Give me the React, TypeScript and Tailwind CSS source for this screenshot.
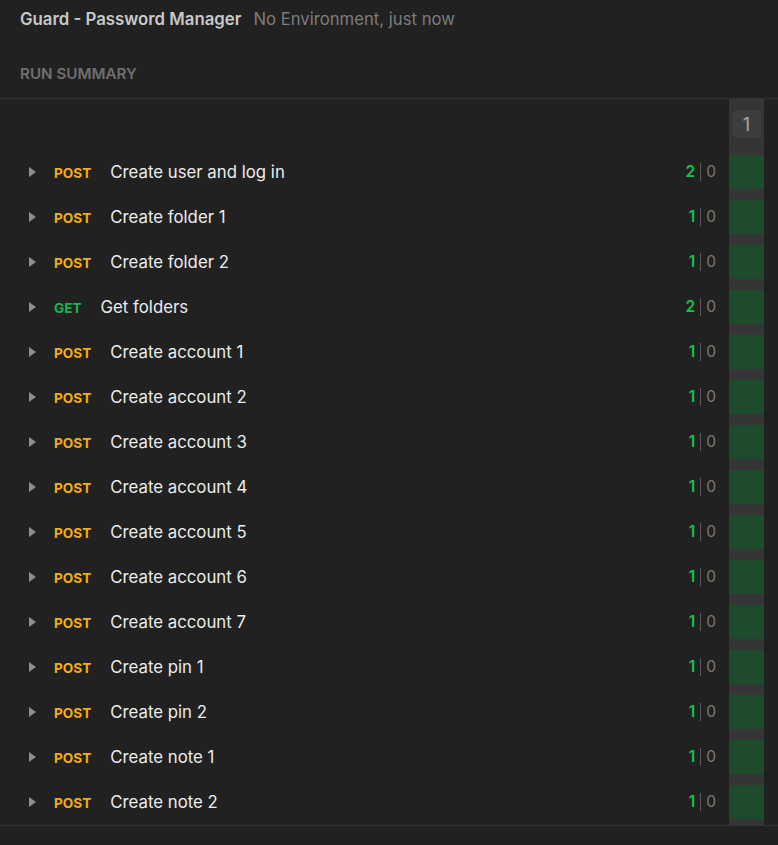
const requests = [
  { method: "POST", name: "Create user and log in", pass: 2 },
  { method: "POST", name: "Create folder 1", pass: 1 },
  { method: "POST", name: "Create folder 2", pass: 1 },
  { method: "GET", name: "Get folders", pass: 2 },
  { method: "POST", name: "Create account 1", pass: 1 },
  { method: "POST", name: "Create account 2", pass: 1 },
  { method: "POST", name: "Create account 3", pass: 1 },
  { method: "POST", name: "Create account 4", pass: 1 },
  { method: "POST", name: "Create account 5", pass: 1 },
  { method: "POST", name: "Create account 6", pass: 1 },
  { method: "POST", name: "Create account 7", pass: 1 },
  { method: "POST", name: "Create pin 1", pass: 1 },
  { method: "POST", name: "Create pin 2", pass: 1 },
  { method: "POST", name: "Create note 1", pass: 1 },
  { method: "POST", name: "Create note 2", pass: 1 },
];

const Caret = () => (
  <svg width="7" height="10" viewBox="0 0 7 10" className="shrink-0">
    <path d="M0 0 L7 5 L0 10 Z" fill="#8f8f8f" />
  </svg>
);

const App = () => {
  return (
    <div
      className="w-[778px] h-[845px] bg-[#212121] overflow-hidden"
      style={{ fontFamily: "Inter, 'Noto Sans', sans-serif" }}
    >
      <div className="flex items-center h-[39px] pl-[20px]">
        <span className="text-[16.8px] font-semibold text-[#c9c9c9]">
          Guard - Password Manager
        </span>
        <span className="ml-[12px] text-[16.7px] text-[#7d7d7d]">
          No Environment, just now
        </span>
      </div>

      <div className="flex items-center h-[60px] pl-[20px] pt-[12px] border-b border-[#333333]">
        <span className="text-[15.2px] font-semibold text-[#6f6f6f]">
          RUN SUMMARY
        </span>
      </div>

      <div className="border-b border-[#333333]">
        <div className="flex">
          <div className="flex-1" />
          <div className="w-[35px] h-[56px] bg-[#353535] flex justify-center pt-[11px] mr-[14px]">
            <div className="w-[28px] h-[28px] rounded-[4px] bg-[#3d3d3d] flex items-center justify-center text-[18px] text-[#a8a8a8]">
              1
            </div>
          </div>
        </div>

        {requests.map((req, i) => (
          <div key={i} className="flex">
            <div className="flex-1 h-[34px] flex items-center pl-[29px] pr-[13px]">
              <Caret />
              <div className="flex items-baseline pt-[1px] leading-none">
                <span
                  className={
                    req.method === "GET"
                      ? "ml-[18px] text-[13.6px] font-bold text-[#14b84e]"
                      : "ml-[18px] text-[13.6px] font-bold text-[#f6ad12]"
                  }
                >
                  {req.method}
                </span>
                <span className="ml-[19px] text-[16.8px] text-[#ececec]">
                  {req.name}
                </span>
              </div>
              <div className="ml-auto flex items-center text-[15.5px]">
                <span className="font-semibold text-[#16c24f]">{req.pass}</span>
                <span className="mx-[5px] w-[1px] h-[18px] bg-[#5a5a5a]" />
                <span className="text-[#7a7a7a]">0</span>
              </div>
            </div>
            <div
              className={
                i === requests.length - 1
                  ? "w-[35px] bg-[#353535] pb-[6px] mr-[14px]"
                  : "w-[35px] bg-[#353535] pb-[11px] mr-[14px]"
              }
            >
              <div className="h-[34px] bg-[#1e4b2b]" />
            </div>
          </div>
        ))}
      </div>
    </div>
  );
};

export default App;
